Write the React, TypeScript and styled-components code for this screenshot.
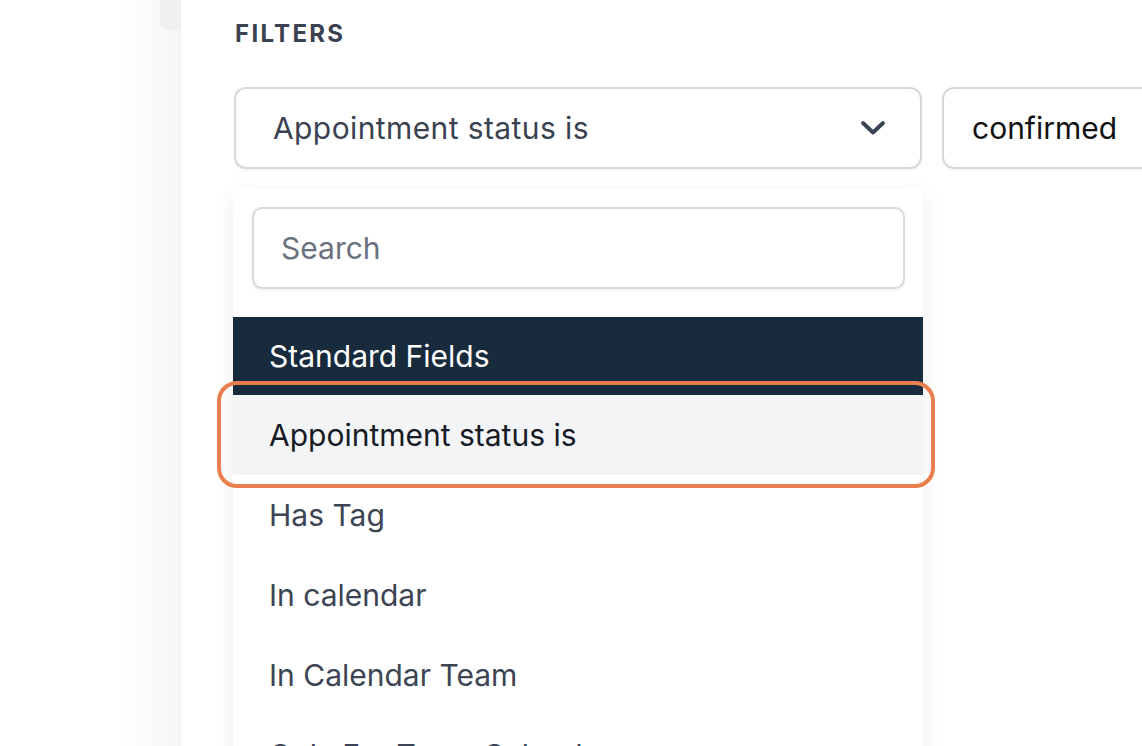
import styled, { createGlobalStyle } from 'styled-components';

const GlobalStyle = createGlobalStyle`
  html, body {
    margin: 0;
    padding: 0;
    background: #ffffff;
  }
  body {
    font-family: Inter, 'Noto Sans', 'Liberation Sans', sans-serif;
    overflow: hidden;
  }
`;

const fields = ['Has Tag', 'In calendar', 'In Calendar Team', 'Only For Team Calendar'];

const App = () => {
  return (
    <>
      <GlobalStyle />
      <Page>
        <Gutter>
          <TabStub />
        </Gutter>
        <Main>
          <Label>Filters</Label>
          <FilterRow>
            <Select>
              <span>Appointment status is</span>
              <svg width="26" height="16" viewBox="0 0 26 16" fill="none">
                <polyline
                  points="3,3 13,12.5 23,3"
                  stroke="#3b4352"
                  strokeWidth="3.8"
                  strokeLinecap="round"
                  strokeLinejoin="round"
                />
              </svg>
            </Select>
            <ValueInput>confirmed</ValueInput>
          </FilterRow>
          <Dropdown>
            <SearchBox>
              <input placeholder="Search" />
            </SearchBox>
            <GroupHeader>Standard Fields</GroupHeader>
            <Option $active>
              Appointment status is
              <Highlight />
            </Option>
            {fields.map((f) => (
              <Option key={f}>{f}</Option>
            ))}
          </Dropdown>
        </Main>
      </Page>
    </>
  );
};

const Page = styled.div`
  display: flex;
  width: 1142px;
  height: 746px;
  overflow: hidden;
`;

const Gutter = styled.div`
  width: 181px;
  flex-shrink: 0;
  display: flex;
  justify-content: flex-end;
  align-items: flex-start;
  background: linear-gradient(to right, #ffffff 0, #ffffff 120px, #f7f7f8 175px, #f3f3f4 181px);
`;

const TabStub = styled.div`
  width: 21px;
  height: 30px;
  background: #eef0f2;
  border-bottom-left-radius: 10px;
`;

const Main = styled.div`
  flex: 1;
  min-width: 0;
  padding: 20px 0 0 53px;
  background: #ffffff;
`;

const Label = styled.div`
  font-size: 24px;
  font-weight: 700;
  text-transform: uppercase;
  letter-spacing: 2.3px;
  color: #3a4150;
  line-height: 28px;
  margin-left: 1px;
`;

const FilterRow = styled.div`
  display: flex;
  gap: 20px;
  margin-top: 39px;
`;

const Select = styled.div`
  width: 688px;
  height: 82px;
  box-sizing: border-box;
  flex-shrink: 0;
  display: flex;
  align-items: center;
  justify-content: space-between;
  padding: 0 34px 0 37px;
  border: 2px solid #d7d9dd;
  border-radius: 12px;
  background: #ffffff;
  font-size: 30px;
  letter-spacing: 0.4px;
  color: #3a4150;
  box-shadow: 0 2px 3px rgba(0, 0, 0, 0.04);
`;

const ValueInput = styled.div`
  width: 300px;
  height: 82px;
  box-sizing: border-box;
  flex-shrink: 0;
  display: flex;
  align-items: center;
  padding: 0 28px;
  border: 2px solid #d7d9dd;
  border-radius: 12px;
  font-size: 30px;
  color: #111111;
  box-shadow: 0 2px 3px rgba(0, 0, 0, 0.04);
`;

const Dropdown = styled.div`
  width: 690px;
  margin-top: 20px;
  margin-left: -1px;
  padding-top: 18px;
  background: #ffffff;
  box-shadow: 0 6px 22px rgba(0, 0, 0, 0.07);
`;

const SearchBox = styled.div`
  padding: 0 18px 28px 19px;

  input {
    width: 100%;
    height: 82px;
    box-sizing: border-box;
    padding: 0 27px;
    border: 2px solid #d7d9dd;
    border-radius: 10px;
    font-family: inherit;
    font-size: 30px;
    color: #3a4150;
    outline: none;
    box-shadow: 0 2px 3px rgba(0, 0, 0, 0.05);
  }
  input::placeholder {
    color: #6b717e;
  }
`;

const GroupHeader = styled.div`
  height: 78px;
  display: flex;
  align-items: center;
  padding-left: 36px;
  background: #172b3c;
  color: #ffffff;
  font-size: 30px;
`;

const Option = styled.div<{ $active?: boolean }>`
  position: relative;
  height: 80px;
  display: flex;
  align-items: center;
  padding-left: 36px;
  font-size: 30px;
  color: ${(p) => (p.$active ? '#161b26' : '#3d4453')};
  background: ${(p) => (p.$active ? '#f3f4f6' : '#ffffff')};
`;

const Highlight = styled.div`
  position: absolute;
  z-index: 2;
  top: -14px;
  bottom: -13px;
  left: -16px;
  right: -12px;
  border: 4px solid #e97f4f;
  border-radius: 20px;
  pointer-events: none;
`;

export default App;
